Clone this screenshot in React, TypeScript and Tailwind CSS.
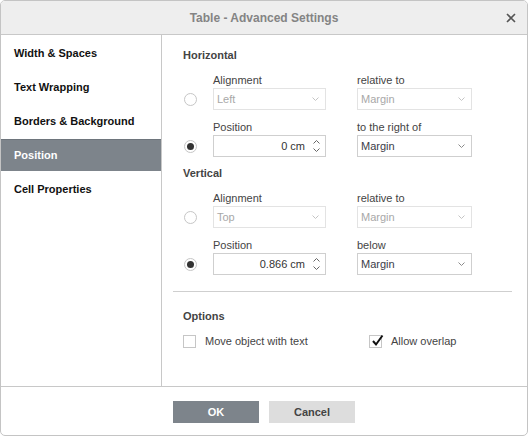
import { ReactNode } from 'react';

const menu = ['Width & Spaces', 'Text Wrapping', 'Borders & Background', 'Position', 'Cell Properties'];

function Chevron({ up, color = '#8a8a8a' }: { up?: boolean; color?: string }) {
  return (
    <svg width="7" height="4" viewBox="0 0 7 4" className="block">
      <path
        d={up ? 'M0.5 3.5L3.5 0.5L6.5 3.5' : 'M0.5 0.5L3.5 3.5L6.5 0.5'}
        fill="none"
        stroke={color}
        strokeWidth="1"
      />
    </svg>
  );
}

function Radio({ checked }: { checked?: boolean }) {
  return (
    <div className="flex h-[22px] w-[30px] items-center pl-[1px]">
      <span className="flex h-[13px] w-[13px] items-center justify-center rounded-full border border-[#c6c6c6] bg-white">
        {checked && <span className="h-[7px] w-[7px] rounded-full bg-[#333333]" />}
      </span>
    </div>
  );
}

function Select({ value, disabled, wide }: { value: string; disabled?: boolean; wide?: boolean }) {
  return (
    <div
      className={
        'flex h-[22px] items-center justify-between border bg-white pl-[3px] pr-[6px] ' +
        (wide ? 'w-[115px] ' : 'w-[113px] ') +
        (disabled ? 'border-[#e3e3e3] text-[#a8a8a8]' : 'border-[#cfcfcf] text-[#3c3c48]')
      }
    >
      <span>{value}</span>
      <Chevron color={disabled ? '#c4c4c4' : '#8a8a8a'} />
    </div>
  );
}

function Spinner({ value }: { value: string }) {
  return (
    <div className="flex h-[22px] w-[113px] items-center justify-end border border-[#cfcfcf] bg-white pr-[5px] text-[#333333]">
      <span className="mr-[8px]">{value}</span>
      <div className="flex flex-col gap-[4px]">
        <Chevron up color="#666666" />
        <Chevron color="#666666" />
      </div>
    </div>
  );
}

function Field({ label, children }: { label: string; children: ReactNode }) {
  return (
    <div className="flex flex-col">
      <div className="h-[15px] leading-[15px] text-[#444444]">{label}</div>
      {children}
    </div>
  );
}

function Row({ checked, children }: { checked?: boolean; children: ReactNode }) {
  return (
    <div className="flex items-end">
      <Radio checked={checked} />
      <div className="flex gap-[31px]">{children}</div>
    </div>
  );
}

function Checkbox({ checked, label }: { checked?: boolean; label: string }) {
  return (
    <div className="flex items-center gap-[9px]">
      <span className="relative h-[13px] w-[13px] border border-[#c6c6c6] bg-white">
        {checked && (
          <svg width="12" height="13" viewBox="0 0 12 13" className="absolute left-[2px] top-[-2px]">
            <path d="M1 7L4 10.5L10.5 1.5" fill="none" stroke="#111111" strokeWidth="2" />
          </svg>
        )}
      </span>
      <span className="text-[#444444]">{label}</span>
    </div>
  );
}

export default function App() {
  return (
    <div
      className="flex h-[436px] w-[528px] flex-col overflow-hidden rounded-[5px] border border-[#c4c4c4] bg-white text-[11px]"
      style={{ fontFamily: '"Liberation Sans", Arial, sans-serif' }}
    >
      <div className="relative flex h-[34px] shrink-0 items-center justify-center border-b border-[#c8c8c8] bg-[#eeeeee]">
        <span className="text-[12px] font-bold text-[#848484]">Table - Advanced Settings</span>
        <svg width="10" height="10" viewBox="0 0 10 10" className="absolute right-[11px] top-[12px]">
          <path d="M1 1L9 9M9 1L1 9" stroke="#555555" strokeWidth="1.6" />
        </svg>
      </div>

      <div className="flex h-[351px] shrink-0">
        <div className="flex w-[161px] shrink-0 flex-col gap-[2px] border-r border-[#c8c8c8] pt-[2px]">
          {menu.map((item) => (
            <div
              key={item}
              className={
                'flex h-[32px] items-center pl-[13px] font-bold ' +
                (item === 'Position' ? 'border-t border-[#6e757c] bg-[#7d848b] text-white' : 'text-[#111111]')
              }
            >
              {item}
            </div>
          ))}
        </div>

        <div className="flex flex-1 flex-col pt-[12px]">
          <div className="pl-[21px]">
            <div className="h-[16px] leading-[16px] font-bold text-[#444444]">Horizontal</div>
            <div className="mt-[10px] flex flex-col gap-[10px]">
              <Row>
                <Field label="Alignment">
                  <Select value="Left" disabled />
                </Field>
                <Field label="relative to">
                  <Select value="Margin" disabled wide />
                </Field>
              </Row>
              <Row checked>
                <Field label="Position">
                  <Spinner value="0 cm" />
                </Field>
                <Field label="to the right of">
                  <Select value="Margin" wide />
                </Field>
              </Row>
            </div>

            <div className="mt-[8px] h-[16px] leading-[16px] font-bold text-[#444444]">Vertical</div>
            <div className="mt-[10px] flex flex-col gap-[10px]">
              <Row>
                <Field label="Alignment">
                  <Select value="Top" disabled />
                </Field>
                <Field label="relative to">
                  <Select value="Margin" disabled wide />
                </Field>
              </Row>
              <Row checked>
                <Field label="Position">
                  <Spinner value="0.866 cm" />
                </Field>
                <Field label="below">
                  <Select value="Margin" wide />
                </Field>
              </Row>
            </div>
          </div>

          <div className="ml-[11px] mr-[15px] mt-[16px] border-t border-[#cfcfcf]" />

          <div className="pl-[21px]">
            <div className="mt-[16px] h-[16px] leading-[16px] font-bold text-[#444444]">Options</div>
            <div className="mt-[9px] flex">
              <div className="w-[186px]">
                <Checkbox label="Move object with text" />
              </div>
              <Checkbox checked label="Allow overlap" />
            </div>
          </div>
        </div>
      </div>

      <div className="flex flex-1 justify-center gap-[10px] border-t border-[#c8c8c8] pt-[14px]">
        <button className="h-[22px] w-[86px] bg-[#7d848b] font-bold text-white">OK</button>
        <button className="h-[22px] w-[86px] bg-[#dddddd] font-bold text-[#444444]">Cancel</button>
      </div>
    </div>
  );
}
